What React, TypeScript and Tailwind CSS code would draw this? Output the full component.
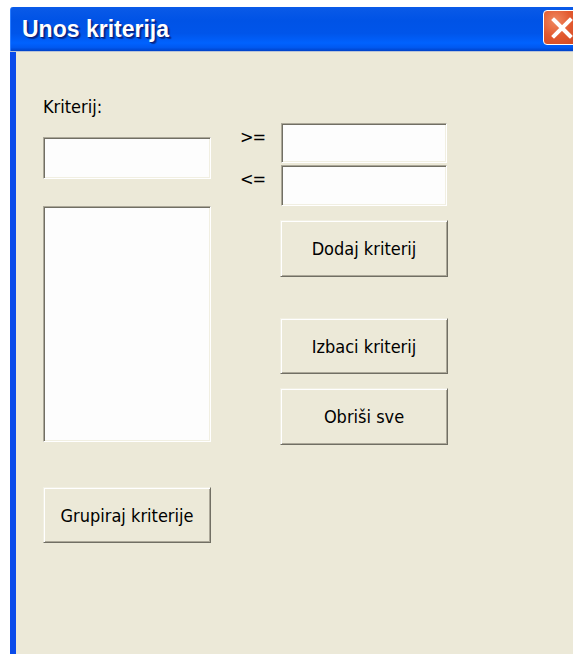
import React from "react";

const ui = { fontFamily: '"DejaVu Sans Condensed", "DejaVu Sans", Tahoma, sans-serif' };

function Sunken({ className }: { className: string }) {
  return (
    <div
      className={`border border-t-[#aca899] border-l-[#aca899] border-r-white border-b-white bg-[#fdfdfd] shadow-[inset_1px_1px_0_#716f64,inset_-1px_-1px_0_#f1efe2] ${className}`}
    />
  );
}

function Btn({ label, className }: { label: string; className: string }) {
  return (
    <button
      className={`flex items-center justify-center border border-t-[#f1efe2] border-l-[#f1efe2] border-r-[#716f64] border-b-[#716f64] bg-[#ece9d8] text-[18px] text-black shadow-[inset_1px_1px_0_#ffffff,inset_-1px_-1px_0_#aca899] ${className}`}
      style={ui}
    >
      {label}
    </button>
  );
}

export default function App() {
  return (
    <div className="h-[654px] w-[573px] overflow-hidden bg-white pl-[10px] pt-[7px]">
      <div className="flex h-full flex-col">
        {/* caption bar */}
        <div className="relative flex h-[44px] shrink-0 items-center rounded-tl-[3px] border-l border-l-[#2a7cff] bg-[linear-gradient(to_bottom,#0a5ae8_0%,#0053e6_30%,#0055ea_60%,#0062ff_82%,#0058f0_92%,#0042c8_100%)] pl-[11px]">
          <span
            className="text-[23px] font-bold text-white [text-shadow:1px_1px_0_#0a1e80,2px_2px_1px_rgba(0,20,90,0.6)]"
            style={{ fontFamily: '"Liberation Sans", Arial, sans-serif' }}
          >
            Unos kriterija
          </span>
          <div className="absolute left-[532px] top-[3px] flex h-[35px] w-[40px] items-center rounded-[4px] border border-white bg-[radial-gradient(circle_at_30%_30%,#f08a62_0%,#e2592f_45%,#cc4420_100%)] pl-[7px]">
            <svg width="22" height="22" viewBox="0 0 22 22">
              <path d="M3 3 L19 19 M19 3 L3 19" stroke="white" strokeWidth="4" strokeLinecap="square" />
            </svg>
          </div>
        </div>
        <div className="h-px shrink-0 bg-[#b9c3d6]" />

        {/* client area */}
        <div className="flex flex-1 border-l-[6px] border-l-[#0a4bea] bg-[#ece9d8]" style={ui}>
          <div className="ml-[27px] flex w-[168px] flex-col">
            <div className="mt-[44px] text-[18px] leading-[22px] text-black">Kriterij:</div>
            <Sunken className="mt-[19px] h-[42px] w-[168px]" />
            <Sunken className="mt-[27px] h-[236px] w-[168px]" />
            <Btn label="Grupiraj kriterije" className="mt-[45px] h-[56px] w-[168px]" />
          </div>

          <div className="ml-[29px] flex flex-col pt-[71px]">
            <div className="flex items-start">
              <span className="w-[41px] pt-[4px] text-[18px] leading-[20px] tracking-[-1px] text-black">&gt;=</span>
              <Sunken className="h-[40px] w-[166px]" />
            </div>
            <div className="mt-[2px] flex items-start">
              <span className="w-[41px] pt-[4px] text-[18px] leading-[20px] tracking-[-1px] text-black">&lt;=</span>
              <Sunken className="h-[41px] w-[166px]" />
            </div>
            <Btn label="Dodaj kriterij" className="ml-[40px] mt-[14px] h-[57px] w-[168px]" />
            <Btn label="Izbaci kriterij" className="ml-[40px] mt-[41px] h-[56px] w-[168px]" />
            <Btn label="Obriši sve" className="ml-[40px] mt-[14px] h-[57px] w-[168px]" />
          </div>
        </div>
      </div>
    </div>
  );
}
